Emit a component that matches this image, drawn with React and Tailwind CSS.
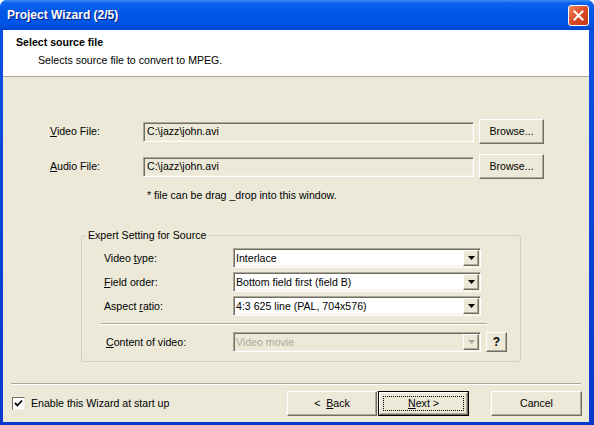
const raised =
  'bg-[#ECE9D8] border border-t-white border-l-white border-r-[#716F64] border-b-[#716F64] shadow-[inset_-1px_-1px_0_#ACA899]';
const sunken =
  'border border-t-[#ACA899] border-l-[#ACA899] border-r-white border-b-white shadow-[inset_1px_1px_0_#716F64,inset_-1px_-1px_0_#F1EFE2]';

function PushButton({ children, className = '', def = false }) {
  if (def) {
    return (
      <div className={`border border-black ${className}`}>
        <div className={`${raised} h-full flex items-center justify-center p-[3px]`}>
          <div className="w-full h-full border border-dotted border-black flex items-center justify-center">
            {children}
          </div>
        </div>
      </div>
    );
  }
  return <div className={`${raised} flex items-center justify-center ${className}`}>{children}</div>;
}

function TextField({ value }) {
  return (
    <div className={`${sunken} bg-[#ECE9D8] w-[331px] h-[20px] flex items-center px-[3px]`}>
      <span>{value}</span>
    </div>
  );
}

function Arrow({ disabled }) {
  return (
    <svg width="7" height="4" viewBox="0 0 7 4">
      <path d="M0 0h7L3.5 4z" fill={disabled ? '#ACA899' : '#000'} />
    </svg>
  );
}

function Combo({ value, disabled = false }) {
  return (
    <div
      className={`${sunken} w-[248px] h-[20px] flex items-center ${disabled ? 'bg-[#ECE9D8] text-[#ACA899]' : 'bg-white'}`}
    >
      <span className="flex-1 px-[2px]">{value}</span>
      <div className={`${raised} w-[16px] h-[16px] mr-[1px] flex items-center justify-center`}>
        <Arrow disabled={disabled} />
      </div>
    </div>
  );
}

function Row({ label, children, pad = 'pl-[22px]', labelW = 'w-[129px]' }) {
  return (
    <div className={`flex items-center ${pad}`}>
      <div className={labelW}>{label}</div>
      {children}
    </div>
  );
}

export default function App() {
  return (
    <div className="w-[594px] h-[425px] flex flex-col rounded-t-[7px] overflow-hidden bg-[linear-gradient(to_bottom,#0B52E4,#0838CC)] font-['Liberation_Sans',Arial,sans-serif] text-[10.6px] leading-[13px] text-black">
      {/* title bar */}
      <div className="h-[30px] shrink-0 flex items-center pl-[7px] pr-[5px] bg-[linear-gradient(to_bottom,#3D8DF5_0%,#0A62EE_10%,#0057E7_45%,#0054E3_80%,#0046CF_100%)]">
        <span className="flex-1 text-white font-bold text-[12px] [text-shadow:1px_1px_0_#0A1E80]">
          Project Wizard (2/5)
        </span>
        <div className="w-[21px] h-[21px] rounded-[3px] border border-white bg-[linear-gradient(135deg,#EE8A66,#DB4A23_50%,#C2361A)] flex items-center justify-center">
          <svg width="11" height="11" viewBox="0 0 11 11">
            <path d="M1.5 1.5l8 8M9.5 1.5l-8 8" stroke="#fff" strokeWidth="2" strokeLinecap="square" />
          </svg>
        </div>
      </div>

      <div className="flex-1 flex flex-col ml-[3px] mr-[5px] mb-[3px] bg-[#ECE9D8]">
        {/* header */}
        <div className="h-[47px] shrink-0 bg-white border-b border-[#ACA899] pt-[6px]">
          <div className="pl-[13px] font-bold">Select source file</div>
          <div className="pl-[35px] mt-[5px]">Selects source file to convert to MPEG.</div>
        </div>

        {/* files */}
        <div className="flex items-center pl-[47px] mt-[42px]">
          <div className="w-[93px]">
            <u>V</u>ideo File:
          </div>
          <TextField value="C:\jazz\john.avi" />
          <PushButton className="w-[65px] h-[25px] ml-[5px]">Browse...</PushButton>
        </div>
        <div className="flex items-center pl-[47px] mt-[10px]">
          <div className="w-[93px]">
            <u>A</u>udio File:
          </div>
          <TextField value="C:\jazz\john.avi" />
          <PushButton className="w-[65px] h-[25px] ml-[5px]">Browse...</PushButton>
        </div>
        <div className="pl-[144px] mt-[10px]">* file can be drag _drop into this window.</div>

        {/* expert settings */}
        <fieldset className="ml-[78px] w-[440px] mt-[27px] border border-[#D0D0BF] rounded-[3px] pt-[6px] pb-[9px]">
          <legend className="ml-[4px] px-[2px]">Expert Setting for Source</legend>
          <div className="flex flex-col gap-[4px]">
            <Row
              label={
                <>
                  Video <u>t</u>ype:
                </>
              }
            >
              <Combo value="Interlace" />
            </Row>
            <Row
              label={
                <>
                  <u>F</u>ield order:
                </>
              }
            >
              <Combo value="Bottom field first (field B)" />
            </Row>
            <Row
              label={
                <>
                  Aspect <u>r</u>atio:
                </>
              }
            >
              <Combo value="4:3 625 line (PAL, 704x576)" />
            </Row>
          </div>
          <div className="ml-[19px] w-[386px] mt-[7px] border-t border-[#ACA899] border-b border-b-white" />
          <div className="mt-[7px]">
            <Row
              pad="pl-[24px]"
              labelW="w-[127px]"
              label={
                <>
                  <u>C</u>ontent of video:
                </>
              }
            >
              <Combo value="Video movie" disabled />
              <PushButton className="w-[21px] h-[20px] ml-[5px] font-bold text-[12px]">?</PushButton>
            </Row>
          </div>
        </fieldset>

        {/* footer */}
        <div className="mt-auto">
          <div className="mx-[8px] border-t border-[#ACA899] border-b border-b-white" />
          <div className="flex items-center mt-[6px] mb-[6px] pl-[9px] pr-[7px]">
            <div className="w-[13px] h-[13px] bg-white border border-t-[#716F64] border-l-[#716F64] border-r-[#F1EFE2] border-b-[#F1EFE2] flex items-center justify-center">
              <svg width="9" height="9" viewBox="0 0 9 9">
                <path d="M1 4l2.5 2.5L8 1.5" stroke="#000" strokeWidth="1.8" fill="none" />
              </svg>
            </div>
            <span className="ml-[6px] flex-1">Enable this Wizard at start up</span>
            <PushButton className="w-[90px] h-[25px]">
              <span>
                &lt;&nbsp; <u>B</u>ack
              </span>
            </PushButton>
            <PushButton def className="w-[91px] h-[25px] ml-[1px]">
              <span>
                <u>N</u>ext &gt;
              </span>
            </PushButton>
            <PushButton className="w-[91px] h-[25px] ml-[22px]">Cancel</PushButton>
          </div>
        </div>
      </div>
    </div>
  );
}
